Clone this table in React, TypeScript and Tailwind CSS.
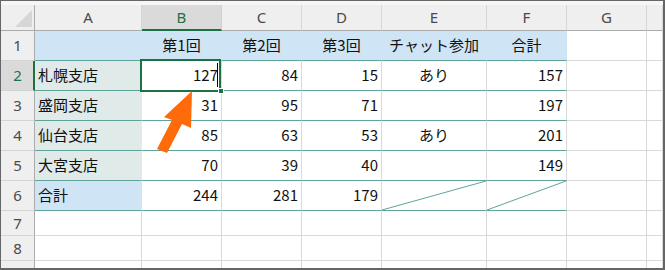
const COLS = ['A', 'B', 'C', 'D', 'E', 'F', 'G', ''];
const WIDTHS = ['w-[107px]', 'w-[80px]', 'w-[80px]', 'w-[80px]', 'w-[105px]', 'w-[80px]', 'w-[80px]', 'w-[16px]'];

const DATA: string[][] = [
  ['', '第1回', '第2回', '第3回', 'チャット参加', '合計'],
  ['札幌支店', '127', '84', '15', 'あり', '157'],
  ['盛岡支店', '31', '95', '71', '', '197'],
  ['仙台支店', '85', '63', '53', 'あり', '201'],
  ['大宮支店', '70', '39', '40', '', '149'],
  ['合計', '244', '281', '179', '', ''],
];

type Fill = 'blue' | 'teal' | 'none';

function fillOf(row: number, col: number): Fill {
  if (row === 1 && col <= 5) return 'blue';
  if (row === 6 && col === 0) return 'blue';
  if (row >= 2 && row <= 5 && col === 0) return 'teal';
  return 'none';
}

function RowHeader({ n, selected }: { n: number; selected?: boolean }) {
  return (
    <div
      className={
        selected
          ? 'w-[34px] h-full shrink-0 flex items-center justify-center bg-[#dadada] text-[#1e7145] border-b border-b-[#d4d4d4] border-r-2 border-r-[#1e7145] pl-[1px]'
          : 'w-[34px] h-full shrink-0 flex items-center justify-center bg-[#efefef] text-[#4a4a4a] border-b border-b-[#d4d4d4] border-r border-r-[#ababab]'
      }
    >
      <span className="text-[15px] font-['Noto_Sans',sans-serif]">{n}</span>
    </div>
  );
}

function DiagonalLine() {
  return (
    <svg className="absolute inset-0 w-full h-full" preserveAspectRatio="none" viewBox="0 0 100 100">
      <line x1="0" y1="100" x2="100" y2="0" stroke="#5fa39b" strokeWidth="1" vectorEffect="non-scaling-stroke" />
    </svg>
  );
}

function DataCell({ row, col }: { row: number; col: number }) {
  const text = row <= 6 && col <= 5 ? DATA[row - 1][col] : '';
  const fill = fillOf(row, col);
  const inTable = row <= 6 && col <= 5;

  const bg = fill === 'blue' ? 'bg-[#cfe4f5]' : fill === 'teal' ? 'bg-[#dfeae9]' : 'bg-white';
  const right =
    fill === 'blue' ? 'border-r border-r-[#cfe4f5]' : fill === 'teal' ? 'border-r border-r-[#dfeae9]' : 'border-r border-r-[#d9d9d9]';
  const bottom = inTable ? 'border-b border-b-[#5fa39b]' : 'border-b border-b-[#d9d9d9]';

  let align = 'justify-end pr-[3px]';
  if (row === 1 || col === 4) align = 'justify-center';
  else if (col === 0) align = 'justify-start pl-[3px]';

  const diag = row === 6 && (col === 4 || col === 5);

  return (
    <div className={`${WIDTHS[col]} h-full shrink-0 relative flex items-center ${bg} ${right} ${bottom} ${align}`}>
      {diag && <DiagonalLine />}
      <span className="text-[15px] text-[#111] whitespace-nowrap font-['Noto_Sans_CJK_JP',sans-serif]">{text}</span>
    </div>
  );
}

function SheetRow({ row, height }: { row: number; height: string }) {
  return (
    <div className={`flex ${height}`}>
      <RowHeader n={row} selected={row === 2} />
      {COLS.map((_, c) => (
        <DataCell key={c} row={row} col={c} />
      ))}
    </div>
  );
}

export default function App() {
  return (
    <div className="relative w-[665px] h-[270px] overflow-hidden bg-white border-l border-t border-[#666] border-r-2 border-b-2">
      {/* top strip */}
      <div className="h-[4px] bg-[#f6f6f6]" />

      {/* column headers */}
      <div className="flex h-[26px]">
        <div className="w-[34px] h-full shrink-0 relative bg-[#efefef] border-r border-r-[#ababab] border-b border-b-[#ababab]">
          <svg className="absolute left-0 top-0" width="34" height="26" viewBox="0 0 34 26">
            <polygon points="31,5 31,22 14,22" fill="#d6d6d6" />
          </svg>
        </div>
        {COLS.map((c, i) =>
          i === 1 ? (
            <div
              key={i}
              className={`${WIDTHS[i]} h-full shrink-0 flex items-center justify-center bg-[#dadada] text-[#1e7145] border-r border-r-[#cfcfcf] border-b-2 border-b-[#1e7145]`}
            >
              <span className="text-[15px] font-['Noto_Sans',sans-serif]">{c}</span>
            </div>
          ) : (
            <div
              key={i}
              className={`${WIDTHS[i]} h-full shrink-0 flex items-center justify-center bg-[#efefef] text-[#4a4a4a] border-r border-r-[#d6d6d6] border-b border-b-[#ababab]`}
            >
              <span className="text-[15px] font-['Noto_Sans',sans-serif]">{c}</span>
            </div>
          )
        )}
      </div>

      {[1, 2, 3, 4, 5, 6].map((r) => (
        <SheetRow key={r} row={r} height="h-[30px]" />
      ))}
      <SheetRow row={7} height="h-[25px]" />
      <SheetRow row={8} height="h-[25px]" />
      <div className="h-[7px] overflow-hidden">
        <SheetRow row={9} height="h-[25px]" />
      </div>

      {/* active cell B2 */}
      <div className="absolute left-[139px] top-[58px] w-[81px] h-[33px] border-2 border-[#1e7145]" />
      <div className="absolute left-[216px] top-[62px] w-px h-[24px] bg-black" />
      <div className="absolute left-[217px] top-[87px] w-[6px] h-[6px] bg-[#1e7145] border border-white" />

      {/* arrow */}
      <svg className="absolute left-[-1px] top-[-1px] pointer-events-none" width="665" height="270" viewBox="0 0 665 270">
        <polygon
          points="192,91 191,128 182,124 167,153 157,149 172,120 164,117"
          fill="#ff6a0a"
        />
      </svg>
    </div>
  );
}
